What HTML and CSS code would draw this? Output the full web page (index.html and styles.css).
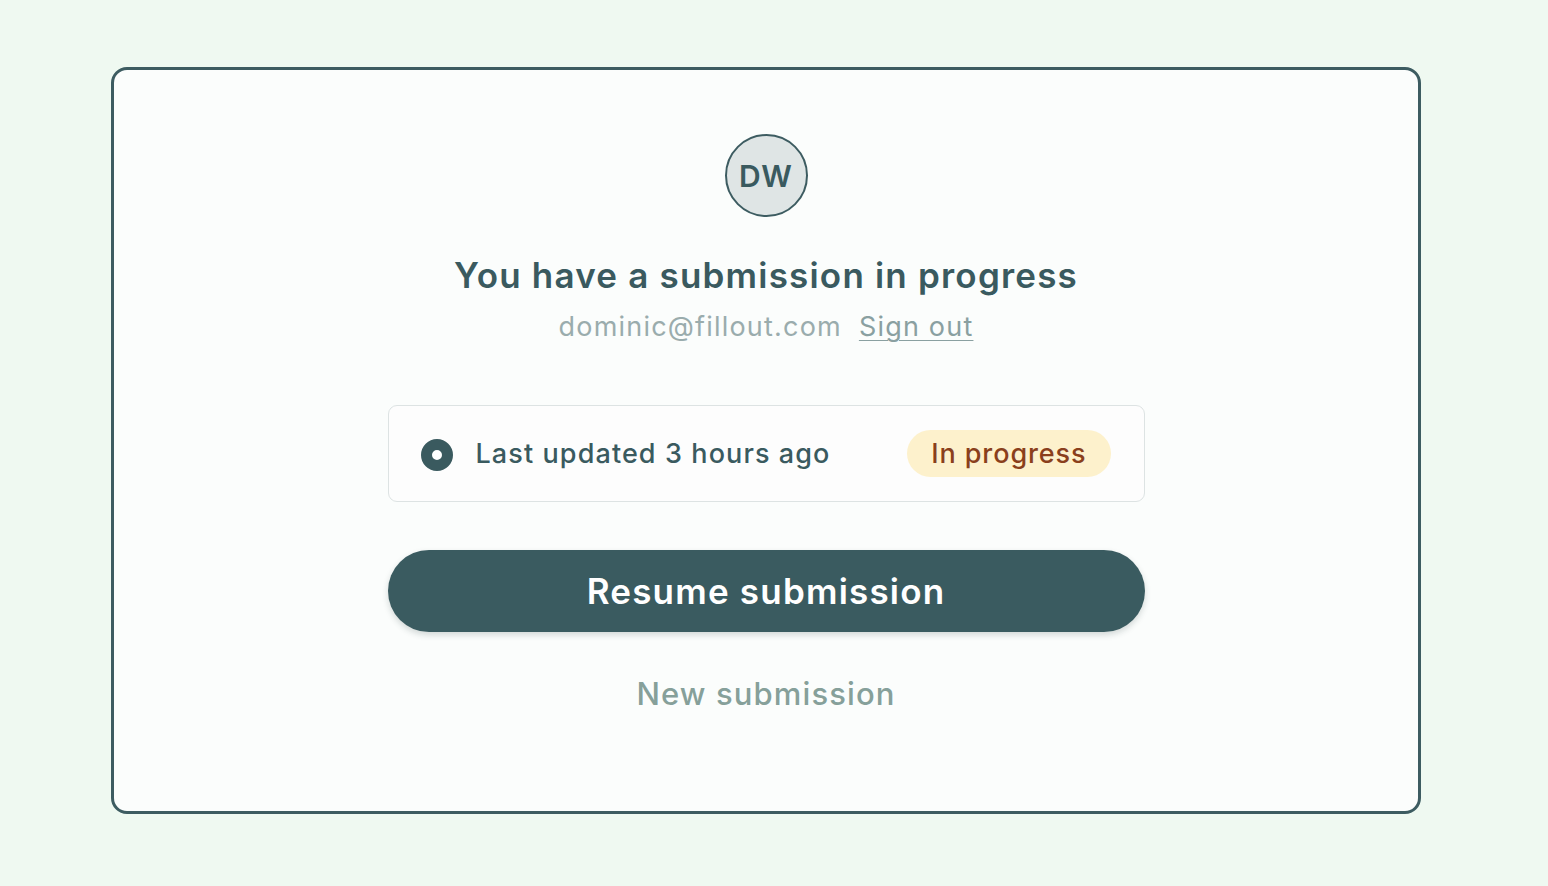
FILE: index.html
```html
<!DOCTYPE html>
<html lang="en">
<head>
<meta charset="utf-8">
<title>Submission in progress</title>
<link rel="stylesheet" href="styles.css">
</head>
<body>
<main class="page">
  <section class="card">
    <div class="avatar">DW</div>
    <h1 class="title">You have a submission in progress</h1>
    <p class="account"><span class="email">dominic@fillout.com</span><a class="signout" href="#">Sign out</a></p>
    <div class="entry">
      <div class="entry-left">
        <span class="radio"></span>
        <span class="entry-text">Last updated 3 hours ago</span>
      </div>
      <span class="badge">In progress</span>
    </div>
    <button class="resume" type="button">Resume submission</button>
    <button class="new" type="button">New submission</button>
  </section>
</main>
</body>
</html>
```

FILE: styles.css
```css
* { box-sizing: border-box; }
html, body { margin: 0; padding: 0; }
body {
  background: #eff9f1;
  font-family: "Inter", "Noto Sans", sans-serif;
  color: #3a5a5f;
}
.page {
  padding: 67px 0 0 111px;
  height: 886px;
}
.card {
  width: 1310px;
  height: 747px;
  border: 3px solid #3d5c61;
  border-radius: 16px;
  background: #fbfdfc;
  display: flex;
  flex-direction: column;
  align-items: center;
  padding-top: 64px;
}
.avatar {
  width: 83px;
  height: 83px;
  border-radius: 50%;
  border: 2px solid #3d5c61;
  background: #dfe5e5;
  display: flex;
  align-items: center;
  justify-content: center;
  font-size: 30px;
  font-weight: 600;
  color: #3a5a5f;
  letter-spacing: 1px;
}
.title {
  margin: 36px 0 0;
  font-size: 35px;
  line-height: 44px;
  font-weight: 600;
  letter-spacing: 1.2px;
  color: #3a5a5f;
}
.account {
  margin: 12px 0 0;
  font-size: 27px;
  line-height: 36px;
  letter-spacing: 1.2px;
  color: #9aacad;
  display: flex;
  gap: 17px;
}
.signout {
  color: #8aa0a1;
  text-decoration: underline;
  text-underline-offset: 4px;
  text-decoration-thickness: 1px;
}
.entry {
  margin-top: 60px;
  width: 757px;
  height: 97px;
  border: 1px solid #dde3e3;
  border-radius: 9px;
  background: #fdfdfd;
  display: flex;
  align-items: center;
  justify-content: space-between;
  padding: 0 33px 0 32px;
}
.entry-left {
  display: flex;
  align-items: center;
  gap: 23px;
}
.radio {
  width: 32px;
  height: 32px;
  border-radius: 50%;
  border: 11px solid #3a5a5f;
  background: #ffffff;
  margin-top: 3px;
}
.entry-text {
  font-size: 27px;
  font-weight: 500;
  letter-spacing: 1.1px;
  color: #3a5a5f;
}
.badge {
  height: 47px;
  padding: 0 24px;
  border-radius: 24px;
  background: #fdf1cc;
  color: #8a3f1c;
  font-size: 27px;
  font-weight: 500;
  letter-spacing: 0.9px;
  display: flex;
  align-items: center;
}
.resume {
  margin-top: 48px;
  width: 757px;
  height: 82px;
  border: none;
  border-radius: 41px;
  background: #3a5b60;
  color: #ffffff;
  font-family: inherit;
  font-size: 35px;
  font-weight: 600;
  letter-spacing: 1.2px;
  box-shadow: 0 3px 6px rgba(30, 50, 50, 0.18);
  cursor: pointer;
}
.new {
  margin-top: 42px;
  border: none;
  background: none;
  padding: 0;
  font-family: inherit;
  font-size: 31px;
  line-height: 40px;
  font-weight: 500;
  letter-spacing: 1.1px;
  color: #86a09a;
  cursor: pointer;
}
```
